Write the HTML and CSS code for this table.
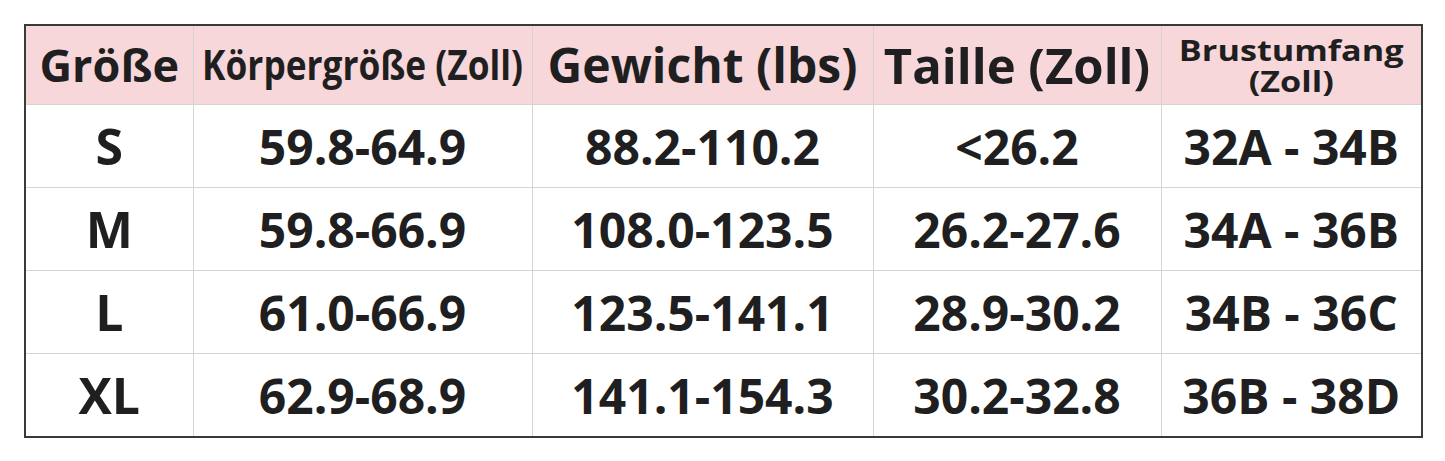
FILE: index.html
```html
<!DOCTYPE html>
<html lang="de">
<head>
<meta charset="utf-8">
<title>Größentabelle</title>
<link rel="stylesheet" href="styles.css">
</head>
<body>
<div class="page">
  <table class="sizes">
    <colgroup>
      <col class="c1"><col class="c2"><col class="c3"><col class="c4"><col class="c5">
    </colgroup>
    <thead>
      <tr>
        <th class="h-size">Größe</th>
        <th class="h-height"><span class="narrow">Körpergröße (Zoll)</span></th>
        <th class="h-weight">Gewicht (lbs)</th>
        <th class="h-waist">Taille (Zoll)</th>
        <th class="h-bust"><span class="wide">Brustumfang<br>(Zoll)</span></th>
      </tr>
    </thead>
    <tbody>
      <tr><td class="size">S</td><td>59.8-64.9</td><td>88.2-110.2</td><td>&lt;26.2</td><td>32A - 34B</td></tr>
      <tr><td class="size">M</td><td>59.8-66.9</td><td>108.0-123.5</td><td>26.2-27.6</td><td>34A - 36B</td></tr>
      <tr><td class="size">L</td><td>61.0-66.9</td><td>123.5-141.1</td><td>28.9-30.2</td><td>34B - 36C</td></tr>
      <tr><td class="size">XL</td><td>62.9-68.9</td><td>141.1-154.3</td><td>30.2-32.8</td><td>36B - 38D</td></tr>
    </tbody>
  </table>
</div>
</body>
</html>
```
FILE: styles.css
```css
html, body {
  margin: 0;
  padding: 0;
  background: #ffffff;
}
.page {
  padding: 24px 0 0 24px;
}
.sizes {
  border-collapse: collapse;
  table-layout: fixed;
  width: 1397px;
  border: 2px solid #3a3a3a;
  font-family: "Open Sans", "Noto Sans", sans-serif;
  font-weight: 700;
  color: #1f1f21;
}
.c1 { width: 168px; }
.c2 { width: 339px; }
.c3 { width: 341px; }
.c4 { width: 288px; }
.c5 { width: 261px; }
.sizes th, .sizes td {
  border: 1px solid #d4d4d4;
  text-align: center;
  vertical-align: middle;
  padding: 0;
  white-space: nowrap;
}
.sizes thead th {
  background: #f7d7d9;
  height: 78px;
  line-height: 1.2;
}
.h-size {
  font-size: 45px;
}
.h-height {
  font-size: 41px;
}
.h-weight {
  font-size: 48px;
}
.h-waist {
  font-size: 49px;
}
.sizes thead th.h-bust {
  font-size: 29px;
  line-height: 31px;
}
.narrow {
  display: inline-block;
  margin: 0 -30px;
  transform: scaleX(0.86);
}
.wide {
  display: inline-block;
  transform: scaleX(1.18);
}
.sizes tbody td {
  height: 82px;
  font-size: 48px;
}
.sizes tbody td.size {
  font-size: 50px;
}
```
